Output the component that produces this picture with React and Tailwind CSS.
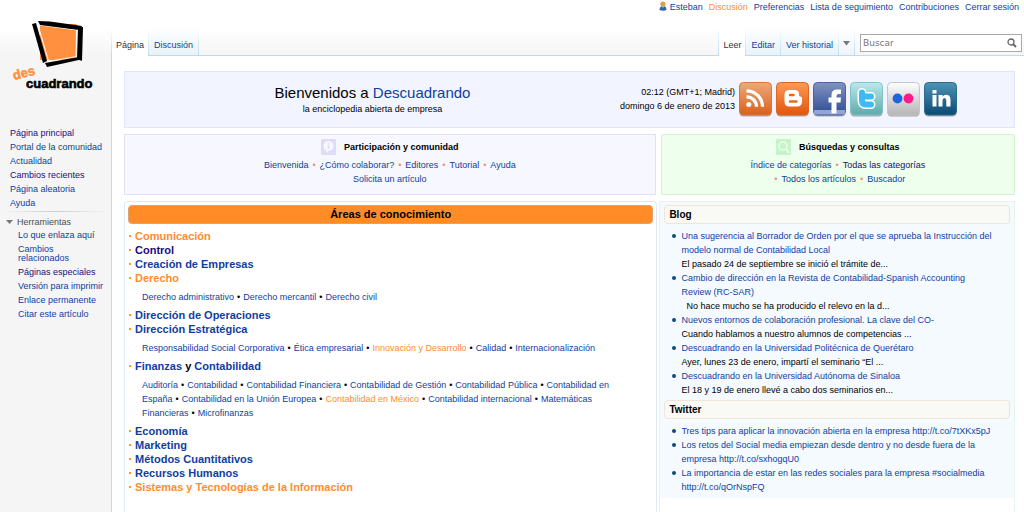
import React from 'react';

const personalLinks = ['Esteban', 'Discusión', 'Preferencias', 'Lista de seguimiento', 'Contribuciones', 'Cerrar sesión'];

const navLinks = [
  { text: 'Página principal', visited: true },
  { text: 'Portal de la comunidad' },
  { text: 'Actualidad' },
  { text: 'Cambios recientes', visited: true },
  { text: 'Página aleatoria' },
  { text: 'Ayuda' },
];

const toolLinks = [
  { text: 'Lo que enlaza aquí' },
  { text: 'Cambios relacionados' },
  { text: 'Páginas especiales', visited: true },
  { text: 'Versión para imprimir' },
  { text: 'Enlace permanente' },
  { text: 'Citar este artículo' },
];

const areas = [
  { title: 'Comunicación', color: 'orange' },
  { title: 'Control', color: 'visited' },
  { title: 'Creación de Empresas' },
  {
    title: 'Derecho',
    color: 'orange',
    topics: ['Derecho administrativo', 'Derecho mercantil', 'Derecho civil'],
  },
  { title: 'Dirección de Operaciones' },
  {
    title: 'Dirección Estratégica',
    topics: ['Responsabilidad Social Corporativa', 'Ética empresarial', 'Innovación y Desarrollo', 'Calidad', 'Internacionalización'],
  },
  {
    title: 'Finanzas',
    and: 'Contabilidad',
    topics: [
      'Auditoría',
      'Contabilidad',
      'Contabilidad Financiera',
      'Contabilidad de Gestión',
      'Contabilidad Pública',
      'Contabilidad en España',
      'Contabilidad en la Unión Europea',
      'Contabilidad en México',
      'Contabilidad internacional',
      'Matemáticas Financieras',
      'Microfinanzas',
    ],
  },
  { title: 'Economía' },
  { title: 'Marketing' },
  { title: 'Métodos Cuantitativos' },
  { title: 'Recursos Humanos' },
  { title: 'Sistemas y Tecnologías de la Información', color: 'orange' },
];

const orangeTopics = ['Innovación y Desarrollo', 'Contabilidad en México'];

const posts = [
  {
    title: 'Una sugerencia al Borrador de Orden por el que se aprueba la Instrucción del modelo normal de Contabilidad Local',
    excerpt: 'El pasado 24 de septiembre se inició el trámite de...',
  },
  {
    title: 'Cambio de dirección en la Revista de Contabilidad-Spanish Accounting Review (RC-SAR)',
    excerpt: '\u00a0 No hace mucho se ha producido el relevo en la d...',
  },
  {
    title: 'Nuevos entornos de colaboración profesional. La clave del CO-',
    excerpt: 'Cuando hablamos a nuestro alumnos de competencias ...',
  },
  {
    title: 'Descuadrando en la Universidad Politécnica de Querétaro',
    excerpt: 'Ayer, lunes 23 de enero, impartí el seminario “El ...',
  },
  {
    title: 'Descuadrando en la Universidad Autónoma de Sinaloa',
    excerpt: 'El 18 y 19 de enero llevé a cabo dos seminarios en...',
  },
];

const tweets = [
  'Tres tips para aplicar la innovación abierta en la empresa http://t.co/7tXKx5pJ',
  'Los retos del Social media empiezan desde dentro y no desde fuera de la empresa http://t.co/sxhogqU0',
  'La importancia de estar en las redes sociales para la empresa #socialmedia http://t.co/qOrNspFQ',
];

const linkColors = {
  blue: 'text-[#0f3ea0]',
  visited: 'text-[#1b0b80]',
  orange: 'text-[#ff8c2e]',
};

function Link({ color = 'blue', className = '', children }) {
  return (
    <a href="#" className={`${linkColors[color]} hover:underline ${className}`}>
      {children}
    </a>
  );
}

function Logo() {
  return (
    <svg width="88" height="74" viewBox="0 0 88 74" role="img" aria-label="Descuadrando">
      <path d="M29 4 H65.500 V40 H29 Z" fill="#ff9040" />
      <path d="M27 5 L37.500 41 M29 5 L66 10 M65.500 9 L65 38 M37 41.500 L66 36.500" stroke="#fff" strokeWidth="1" />
      <path d="M27 1 L39 1.500 L71 6 L69 9.500 L66 9.800 L29 5 Z" fill="#000" />
      <path d="M21 4 L25 3 L36 41 L32 43 Z" fill="#000" />
      <path d="M67 7.500 L72 7 L71 41 L66 39 Z" fill="#000" />
      <path d="M34 43 L68 37 L70 39.500 L36 47 Z" fill="#000" />
      <text
        x="3"
        y="60"
        transform="rotate(-14 3 60)"
        fontFamily="Liberation Sans, sans-serif"
        fontWeight="700"
        fontSize="13"
        fill="#ff9040"
        stroke="#ff9040"
        strokeWidth="0.500"
      >
        des
      </text>
      <text
        x="15"
        y="68"
        fontFamily="Liberation Sans, sans-serif"
        fontWeight="700"
        fontSize="13"
        fill="#000"
        stroke="#000"
        strokeWidth="0.600"
      >
        cuadrando
      </text>
    </svg>
  );
}

function UserIcon() {
  return (
    <svg width="8" height="10" viewBox="0 0 8 10" aria-hidden="true">
      <path d="M0.500 9 Q0.500 5 4 5 Q7.500 5 7.500 9 Q4 10.500 0.500 9 Z" fill="#2f66ad" />
      <path d="M3 5 L5 5 L4 7 Z" fill="#dfe9f5" />
      <circle cx="4" cy="3" r="2.600" fill="#dba24c" />
    </svg>
  );
}

function SocialIcon({ name, from, to, border, children }) {
  return (
    <a href="#" aria-label={name}>
      <svg width="33" height="35" viewBox="0 0 33 35" aria-hidden="true">
        <defs>
          <linearGradient id={name} x1="0" y1="0" x2="0" y2="1">
            <stop offset="0" stopColor={from} />
            <stop offset="1" stopColor={to} />
          </linearGradient>
        </defs>
        <rect x="0.500" y="1.500" width="32" height="33" rx="4" fill="#000" opacity="0.3" />
        <rect x="0.500" y="0.500" width="32" height="32.500" rx="4" fill={`url(#${name})`} stroke={border} />
        {children}
      </svg>
    </a>
  );
}

function SocialIcons() {
  return (
    <div className="flex gap-1">
      <SocialIcon name="RSS" from="#eda97a" to="#d9601a" border="#d8773f">
        <circle cx="9.800" cy="22.500" r="2.500" fill="#fff" />
        <path d="M7.500 14.800 A10 10 0 0 1 17.500 24.800 M7.500 8.800 A16 16 0 0 1 23.500 24.800" fill="none" stroke="#fff" strokeWidth="3.300" />
      </SocialIcon>
      <SocialIcon name="Blogger" from="#fb9a5a" to="#e2560a" border="#e0651f">
        <path d="M13.500 8 H18.500 Q23 8 23 12 V13 Q23 14.500 24.500 14.500 Q26 14.500 26 16.500 V19.500 Q26 24.500 21 24.500 H13.500 Q8.500 24.500 8.500 19.500 V13 Q8.500 8 13.500 8 Z" fill="#fff" />
        <path d="M14 13 H17.500 M14 19.500 H20.500" stroke="#e9681e" strokeWidth="2.400" strokeLinecap="round" />
      </SocialIcon>
      <SocialIcon name="Facebook" from="#8093c4" to="#2f4a92" border="#4a62a3">
        <rect x="1" y="28" width="31" height="4.500" fill="#91a6d5" />
        <path d="M18.500 31.500 V20.500 H15.500 V15.500 H18.500 V13 Q18.500 7.500 24 7.500 H28 V12 H25.500 Q23.500 12 23.500 14 V15.500 H28 L27.500 20.500 H23.500 V31.500 Z" fill="#fff" />
      </SocialIcon>
      <SocialIcon name="Twitter" from="#b9eaec" to="#5fa9ac" border="#83c3c6">
        <path d="M12 10.500 V18.500 Q12 22.500 16 22.500 H21 M12 14.500 H21" fill="none" stroke="#fff" strokeWidth="9" strokeLinecap="round" strokeLinejoin="round" />
        <path d="M12 10.500 V18.500 Q12 22.500 16 22.500 H21 M12 14.500 H21" fill="none" stroke="#3bbcf5" strokeWidth="6" strokeLinecap="round" strokeLinejoin="round" />
      </SocialIcon>
      <SocialIcon name="Flickr" from="#ffffff" to="#b5b5b5" border="#c6c6c6">
        <circle cx="10.500" cy="16.500" r="4.900" fill="#2264dc" />
        <circle cx="21.500" cy="16.500" r="4.900" fill="#ff1a8c" />
      </SocialIcon>
      <SocialIcon name="LinkedIn" from="#4e93b6" to="#0b4a73" border="#2c6a90">
        <path d="M8.500 8 H12.500 V11.500 H8.500 Z M8.500 13 H12.500 V24.500 H8.500 Z M14.500 13 H18.500 V14.500 Q20 12.700 22 12.700 Q26.500 12.700 26.500 18 V24.500 H22.300 V18.500 Q22.300 16 20.500 16 Q18.500 16 18.500 18.500 V24.500 H14.500 Z" fill="#fff" />
      </SocialIcon>
    </div>
  );
}

function TabLine() {
  return <span className="w-px shrink-0 bg-linear-to-b from-white to-[#b9dcf3]" />;
}

function Tab({ selected, children }) {
  return (
    <a
      href="#"
      className={
        selected
          ? 'border-b border-white bg-white px-1 pt-3 text-[#333333]'
          : 'border-b border-[#b9dcf3] bg-linear-to-b from-white to-[#e8f2f8] px-[5px] pt-3 text-[#0f3ea0]'
      }
    >
      {children}
    </a>
  );
}

function Header() {
  return (
    <header>
      <nav className="flex h-7 justify-end gap-[6px] pt-px pr-[5px] leading-3">
        {personalLinks.map((text, i) => (
          <Link key={text} color={text === 'Discusión' ? 'orange' : 'blue'} className="flex gap-[3px]">
            {i === 0 && <UserIcon />}
            {text}
          </Link>
        ))}
      </nav>
      <div className="flex h-7 bg-linear-to-b from-white to-[#f5f5f5] leading-[10px]">
        <TabLine />
        <Tab selected>Página</Tab>
        <TabLine />
        <Tab>Discusión</Tab>
        <TabLine />
        <div className="grow border-b border-[#b9dcf3]" />
        <TabLine />
        <Tab selected>Leer</Tab>
        <TabLine />
        <Tab>Editar</Tab>
        <TabLine />
        <Tab>Ver historial</Tab>
        <TabLine />
        <button
          type="button"
          aria-label="Más opciones"
          className="flex items-center border-b border-[#b9dcf3] bg-linear-to-b from-white to-[#eef5fa] px-1 pt-[3px]"
        >
          <svg width="7" height="5" viewBox="0 0 7 5" aria-hidden="true">
            <path d="M0 0 H7 L3.500 4.500 Z" fill="#777" />
          </svg>
        </button>
        <TabLine />
        <form className="w-[169px] border-b border-[#b9dcf3] pt-[6px] pr-[2px] pl-[5px]">
          <div className="flex h-[18px] items-center border border-[#aaaaaa] bg-white px-[2px]">
            <input
              type="text"
              aria-label="Buscar"
              placeholder="Buscar"
              className="min-w-0 grow font-['DejaVu_Sans'] text-[9px] outline-none placeholder:text-[#777777]"
            />
            <button type="submit" aria-label="Ir" className="px-[2px]">
              <svg width="10" height="10" viewBox="0 0 10 10" fill="none" stroke="#666" aria-hidden="true">
                <circle cx="4" cy="4" r="3" strokeWidth="1.300" />
                <path d="M6 6 L9 9" strokeWidth="2" />
              </svg>
            </button>
          </div>
        </form>
      </div>
    </header>
  );
}

function Sidebar() {
  return (
    <aside className="w-[111px] shrink-0 bg-[#f5f5f5]">
      <div className="h-7 bg-white" />
      <div className="h-7 bg-linear-to-b from-white to-[#f5f5f5]" />
      <a href="#" className="-mt-9 block pl-[11px]">
        <Logo />
      </a>
      <nav className="mt-8 px-[10px] leading-[14px]">
        <ul>
          {navLinks.map((link) => (
            <li key={link.text} className="whitespace-nowrap">
              <Link color={link.visited ? 'visited' : 'blue'}>{link.text}</Link>
            </li>
          ))}
        </ul>
      </nav>
      <div className="mx-1 mt-px h-px bg-linear-to-r from-[#f5f5f5] via-[#cccccc] to-[#f5f5f5]" />
      <nav className="mt-[3px] leading-[14px]">
        <h3 className="flex items-center gap-1 pl-[6px] text-[#4d4d4d]">
          <svg width="7" height="4" viewBox="0 0 7 4" aria-hidden="true">
            <path d="M0 0 H7 L3.500 4 Z" fill="#797979" />
          </svg>
          Herramientas
        </h3>
        <ul className="space-y-[5px] pt-[2px] pr-1 pl-[18px] leading-[9px]">
          {toolLinks.map((link) => (
            <li key={link.text} className={link.text === 'Cambios relacionados' ? 'w-16' : 'whitespace-nowrap'}>
              <Link color={link.visited ? 'visited' : 'blue'}>{link.text}</Link>
            </li>
          ))}
        </ul>
      </nav>
    </aside>
  );
}

function Dot() {
  return <span className="px-1 text-[#f58a8a]">•</span>;
}

function Banner() {
  return (
    <section className="flex items-center border border-[#dfe5fb] bg-[#f2f5ff] py-[10px] pr-[57px]">
      <div className="grow text-center">
        <h1 className="text-[15px] leading-[18px]">
          Bienvenidos a <Link>Descuadrando</Link>
        </h1>
        <p className="leading-[14px]">la enciclopedia abierta de empresa</p>
      </div>
      <p className="pr-1 pb-[2px] text-right leading-[14px]">
        02:12 (GMT+1; Madrid)
        <br />
        domingo 6 de enero de 2013
      </p>
      <SocialIcons />
    </section>
  );
}

function Shortcuts() {
  return (
    <div className="mt-[6px] grid grid-cols-[3fr_2fr] gap-[5px] text-center leading-[14px]">
      <section className="border border-[#e2e0f8] bg-[#f7f7ff] pt-1 pb-2">
        <h2 className="mb-[3px] flex items-center justify-center gap-2 font-bold">
          <svg width="15" height="16" viewBox="0 0 15 16" aria-hidden="true">
            <rect width="15" height="16" rx="1" fill="#dedcf6" />
            <path d="M7.500 2 A5 5 0 0 1 7.500 12 L5 14 V11.300 A5 5 0 0 1 7.500 2 Z" fill="#f7f7ff" />
            <path d="M7.500 4 V5.500 M7.500 6.500 V10" stroke="#dedcf6" strokeWidth="1.500" />
          </svg>
          Participación y comunidad
        </h2>
        <p>
          <Link>Bienvenida</Link>
          <Dot />
          <Link>¿Cómo colaborar?</Link>
          <Dot />
          <Link>Editores</Link>
          <Dot />
          <Link>Tutorial</Link>
          <Dot />
          <Link>Ayuda</Link>
        </p>
        <p>
          <Link>Solicita un artículo</Link>
        </p>
      </section>
      <section className="rounded-xs border border-[#d3f3d3] bg-[#eeffee] pt-1 pb-2">
        <h2 className="mb-[3px] flex items-center justify-center gap-2 font-bold">
          <svg width="15" height="16" viewBox="0 0 15 16" fill="none" stroke="#eeffee" aria-hidden="true">
            <rect width="15" height="16" rx="1" fill="#c8f3c8" stroke="none" />
            <circle cx="7" cy="7" r="4" strokeWidth="1.500" />
            <path d="M10 10 L13 14" strokeWidth="2" />
          </svg>
          Búsquedas y consultas
        </h2>
        <p>
          <Link>Índice de categorías</Link>
          <Dot />
          <Link color="visited">Todas las categorías</Link>
        </p>
        <p>
          <Dot />
          <Link>Todos los artículos</Link>
          <Dot />
          <Link>Buscador</Link>
        </p>
      </section>
    </div>
  );
}

function Areas() {
  return (
    <section className="rounded-t-sm border border-b-0 border-[#dfeaf6] p-[3px]">
      <h2 className="rounded-sm border border-[#e0a070] bg-[#ff8c26] text-center text-[11px] leading-[17px] font-bold">
        Áreas de conocimiento
      </h2>
      <ul className="pt-[5px]">
        {areas.map((area) => (
          <li key={area.title}>
            <h3 className="flex items-center gap-1 pl-px text-[11px] leading-[14px] font-bold">
              <span className="size-[2px] shrink-0 bg-[#ff9a1e]" />
              <span>
                <Link color={area.color}>{area.title}</Link>
                {area.and && (
                  <>
                    {' '}
                    y <Link>{area.and}</Link>
                  </>
                )}
              </span>
            </h3>
            {area.topics && (
              <p className="mt-[5px] mb-1 pr-6 pl-[14px] leading-[14px]">
                {area.topics.map((topic, i) => (
                  <React.Fragment key={topic}>
                    {i > 0 && (
                      <>
                        <span className="px-[3px]">•</span>
                        <wbr />
                      </>
                    )}
                    <Link color={orangeTopics.includes(topic) ? 'orange' : 'blue'}>{topic}</Link>
                  </React.Fragment>
                ))}
              </p>
            )}
          </li>
        ))}
      </ul>
    </section>
  );
}

function BoxTitle({ children }) {
  return (
    <h2 className="rounded-sm border border-[#f0e4d4] bg-[#f9f9f5] px-1 text-[10px] leading-[17px] font-bold">{children}</h2>
  );
}

function NewsItem({ title, excerpt }) {
  return (
    <li className="flex gap-[5px]">
      <span className="mt-[5px] size-1 shrink-0 rounded-full bg-[#0c4a80]" />
      <div>
        <Link>{title}</Link>
        {excerpt && <p>{excerpt}</p>}
      </div>
    </li>
  );
}

function News() {
  return (
    <section className="border border-b-0 border-[#e6f3ef]">
      <div className="bg-[#f5faff] px-1 pt-[3px] pb-1">
        <BoxTitle>Blog</BoxTitle>
        <ul className="pt-[5px] pr-4 pb-[3px] pl-2 leading-[14px]">
          {posts.map((post) => (
            <NewsItem key={post.title} title={post.title} excerpt={post.excerpt} />
          ))}
        </ul>
        <BoxTitle>Twitter</BoxTitle>
        <ul className="pt-[5px] pr-4 pl-2 leading-[14px]">
          {tweets.map((tweet) => (
            <NewsItem key={tweet} title={tweet} />
          ))}
        </ul>
      </div>
    </section>
  );
}

export default function App() {
  return (
    <div className="flex min-h-screen bg-white font-['Liberation_Sans',Arial,sans-serif] text-[9px] text-black">
      <Sidebar />
      <div className="flex min-w-0 grow flex-col">
        <Header />
        <main className="flex grow flex-col border-l border-[#b9dcf3] pt-[15px] pr-[9px] pl-3">
          <Banner />
          <Shortcuts />
          <div className="mt-[6px] grid grow grid-cols-[3fr_2fr] gap-[2px]">
            <Areas />
            <News />
          </div>
        </main>
      </div>
    </div>
  );
}
